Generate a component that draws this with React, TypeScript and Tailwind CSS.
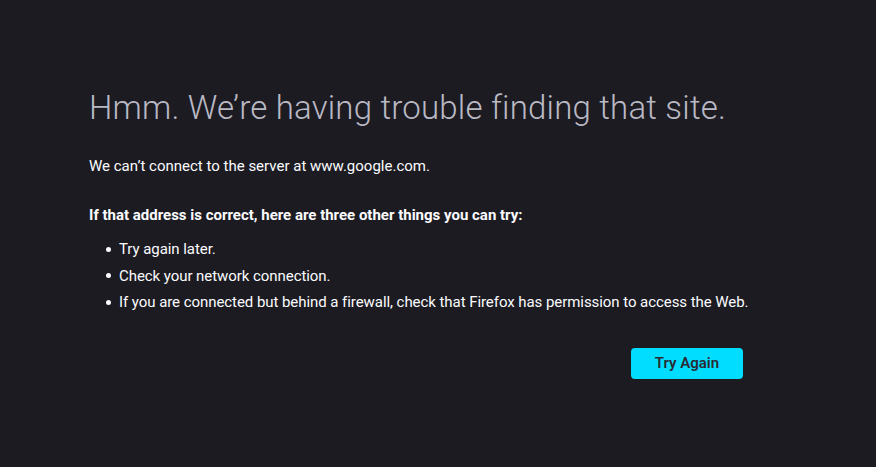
export default function App() {
  const tips = [
    'Try again later.',
    'Check your network connection.',
    'If you are connected but behind a firewall, check that Firefox has permission to access the Web.',
  ];

  return (
    <div className="min-h-[467px] w-full bg-[#1c1b22] text-[#fbfbfe] font-['Roboto',sans-serif]">
      <div className="pl-[89px] pt-[88px] w-[760px]">
        <h1 className="text-[33px] leading-[40px] font-light tracking-[0.2px] text-[#b9b9c4]">
          Hmm. We’re having trouble finding that site.
        </h1>

        <p className="mt-[27px] text-[15px] leading-[22px]">
          We can’t connect to the server at www.google.com.
        </p>

        <p className="mt-[27px] text-[15px] leading-[22px] font-bold">
          If that address is correct, here are three other things you can try:
        </p>

        <ul className="mt-[10px] text-[15px] leading-[26.6px] tracking-[-0.06px]">
          {tips.map((tip) => (
            <li key={tip} className="flex items-center pl-[17px]">
              <span className="mr-[8px] h-[5px] w-[5px] shrink-0 rounded-full bg-[#fbfbfe]" />
              {tip}
            </li>
          ))}
        </ul>

        <div className="mt-[32px] flex w-[654px] justify-end">
          <button className="h-[31px] w-[112px] rounded-[4px] bg-[#00ddff] text-[15px] font-semibold text-[#2b2a33]">
            Try Again
          </button>
        </div>
      </div>
    </div>
  );
}
